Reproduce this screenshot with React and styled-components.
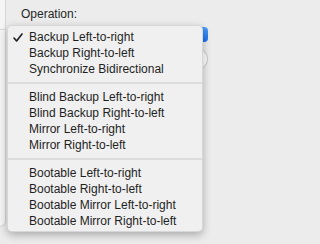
import React from 'react';
import styled, { createGlobalStyle } from 'styled-components';

const GlobalStyle = createGlobalStyle`
    html, body { margin: 0; padding: 0; }
    body {
        width: 211px; height: 244px; overflow: hidden;
        background: #ececec;
        font-family: "Liberation Sans", Arial, sans-serif;
        -webkit-font-smoothing: antialiased;
    }
`;

const Window = styled.div`
    position: relative;
    display: flex;
    width: 211px; height: 244px;
    background: #ececec;
`;
const Sidebar = styled.div`
    width: 6px; height: 227px;
    background: #f5f5f5;
    border-right: 1px solid #d6d6d6;
    border-bottom: 1px solid #d6d6d6;
    border-bottom-right-radius: 6px;
    box-sizing: border-box;
    padding-top: 29px;
`;
const SidebarLine = styled.div`
    height: 1px;
    background: #d9d9d9;
`;
const Main = styled.div`
    flex: 1;
    display: flex;
    flex-direction: column;
    padding: 7px 0 0 15px;
`;
const Label = styled.div`
    font-size: 12px;
    line-height: 14px;
    color: #262626;
`;
const Controls = styled.div`
    display: flex;
    flex-direction: column;
    align-items: flex-end;
    gap: 6px;
    padding-top: 6px;
    margin-right: 3px;
`;
const PopupButton = styled.div`
    width: 40px; height: 15px;
    border-radius: 4px;
    background: linear-gradient(#4b9cf7, #1a6ff0);
`;
const RoundControl = styled.div`
    width: 22px; height: 22px;
    border-radius: 50%;
    background: #fff;
    border: 1px solid #c6c6c6;
    box-sizing: border-box;
`;

const Menu = styled.div`
    position: absolute;
    left: 7px; top: 25px;
    width: 196px;
    box-sizing: border-box;
    padding: 3px 0 2px;
    background: #f0f0f0;
    border: 1px solid rgba(0, 0, 0, 0.1);
    border-radius: 5px;
    box-shadow: 0 3px 9px rgba(0, 0, 0, 0.28);
`;
const Item = styled.div`
    display: flex;
    align-items: center;
    height: 16px;
    padding-left: 21px;
    font-size: 12px;
    color: #1f1f1f;
    white-space: nowrap;
`;
const CheckSlot = styled.span`
    display: inline-flex;
    width: 0;
    margin-left: -16px;
    margin-right: 16px;
    svg { flex-shrink: 0; }
`;
const Separator = styled.div`
    height: 12px;
    box-sizing: border-box;
    padding-top: 5px;
    &::after {
        content: '';
        display: block;
        height: 2px;
        background: #dcdcdc;
    }
`;

const Check = () => (
    <svg width="10" height="9" viewBox="0 0 10 9">
        <path d="M1 5 L3.6 8 L9 1" fill="none" stroke="#1e1e1e" strokeWidth="1.6" strokeLinecap="round" strokeLinejoin="round" />
    </svg>
);

const groups = [
    ['Backup Left-to-right', 'Backup Right-to-left', 'Synchronize Bidirectional'],
    ['Blind Backup Left-to-right', 'Blind Backup Right-to-left', 'Mirror Left-to-right', 'Mirror Right-to-left'],
    ['Bootable Left-to-right', 'Bootable Right-to-left', 'Bootable Mirror Left-to-right', 'Bootable Mirror Right-to-left'],
];

const App = () => {
    const selected = 'Backup Left-to-right';
    return (
        <Window>
            <GlobalStyle />
            <Sidebar><SidebarLine /></Sidebar>
            <Main>
                <Label>Operation:</Label>
                <Controls>
                    <PopupButton />
                    <RoundControl />
                </Controls>
            </Main>
            <Menu>
                {groups.map((group, gi) => (
                    <React.Fragment key={gi}>
                        {gi > 0 && <Separator />}
                        {group.map((label) => (
                            <Item key={label}>
                                {label === selected && <CheckSlot><Check /></CheckSlot>}
                                {label}
                            </Item>
                        ))}
                    </React.Fragment>
                ))}
            </Menu>
        </Window>
    );
};

export default App;
